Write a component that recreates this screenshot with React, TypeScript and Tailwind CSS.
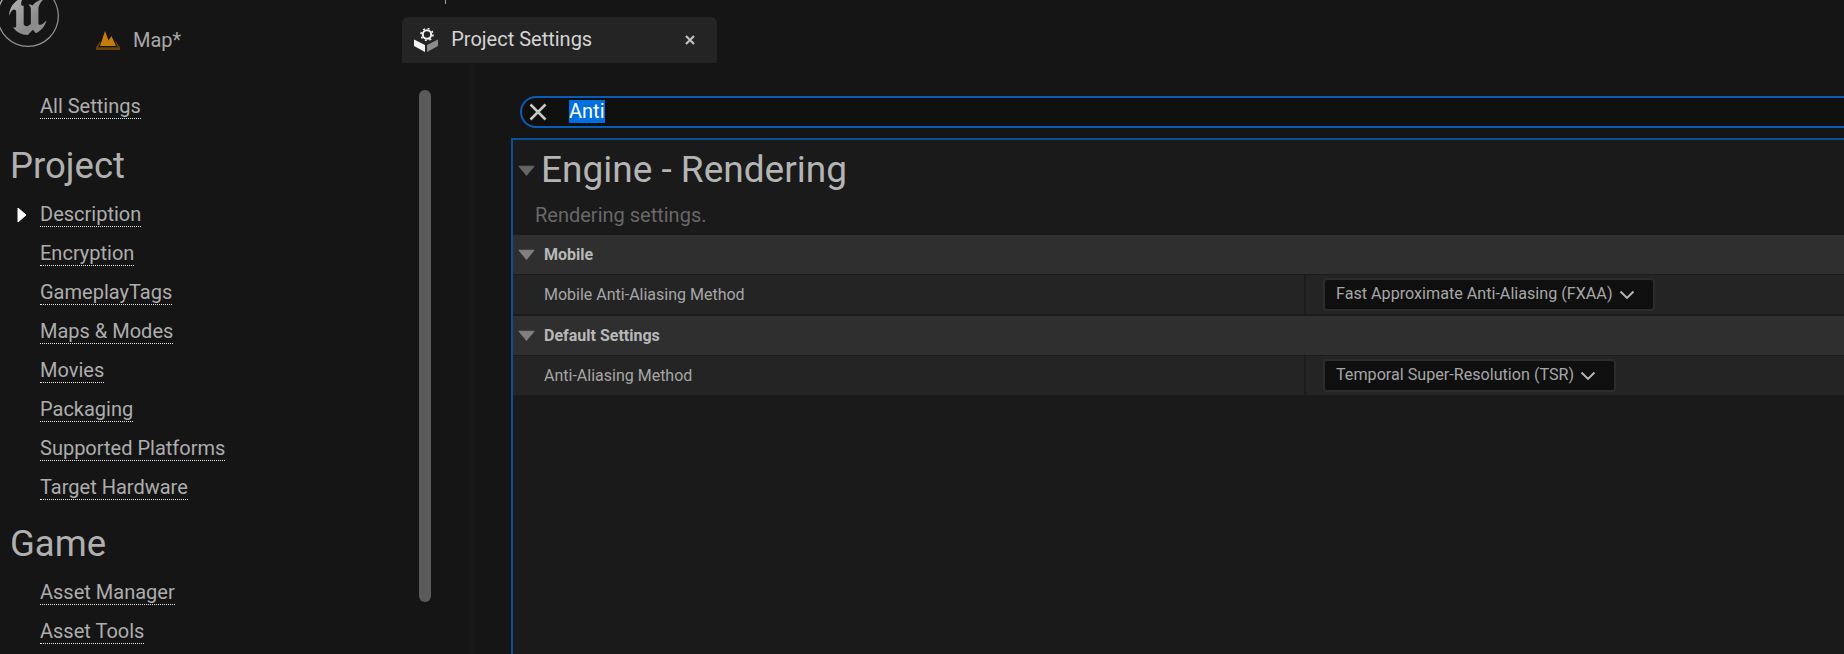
import { SiUnrealengine } from "react-icons/si";

const projectItems = ["Description", "Encryption", "GameplayTags", "Maps & Modes", "Movies", "Packaging", "Supported Platforms", "Target Hardware"];
const gameItems = ["Asset Manager", "Asset Tools"];

function Triangle({ className }: { className: string }) {
  return (
    <svg viewBox="0 0 16 10" className={className}>
      <path d="M1 1h14L8 9.500z" fill="currentColor" stroke="currentColor" strokeWidth="1" strokeLinejoin="round" />
    </svg>
  );
}

function NavItem({ label, active }: { label: string; active?: boolean }) {
  return (
    <div className="flex h-[39px] items-center">
      <div className="flex w-10 shrink-0 justify-start pl-[17px]">
        {active && (
          <svg viewBox="0 0 10 16" className="h-4 w-2.5 text-white">
            <path d="M1 1l8 7-8 7z" fill="currentColor" stroke="currentColor" strokeLinejoin="round" />
          </svg>
        )}
      </div>
      <span className="border-b border-dotted border-[#e8e8e8] text-[20px] leading-[23px] text-[#adadad]">{label}</span>
    </div>
  );
}

function CategoryHeader({ label }: { label: string }) {
  return (
    <div className="flex h-10 items-center border-b border-[#1c1c1c] bg-[#2f2f2f]">
      <Triangle className="ml-[5px] h-[11px] w-[17px] text-[#808080]" />
      <span className="ml-[9px] text-[16px] font-bold text-[#b8b8b8]">{label}</span>
    </div>
  );
}

function SettingRow({ label, value }: { label: string; value: string }) {
  return (
    <div className="flex h-[39px] items-stretch bg-[#242424]">
      <div className="flex w-[793px] shrink-0 items-center border-r-2 border-[#1c1c1c] pl-[31px] text-[16px] text-[#a6a6a6]">{label}</div>
      <div className="flex items-center pl-[17px]">
        <div className="flex h-[33px] items-center gap-[6px] rounded-[4px] border-2 border-[#2c2c2c] bg-[#0f0f0f] pl-[11px] pr-[18px] text-[16.150px] text-[#a6a6a6]">
          <span>{value}</span>
          <svg viewBox="0 0 16 10" className="h-2.5 w-4 text-[#b8b8b8]">
            <path d="M1.500 1.500L8 8l6.500-6.500" fill="none" stroke="currentColor" strokeWidth="1.900" />
          </svg>
        </div>
      </div>
    </div>
  );
}

export default function App() {
  return (
    <div className="flex h-[654px] w-[1844px] flex-col overflow-hidden bg-[#151515] font-['Roboto',sans-serif]">
      {/* title bar */}
      <div className="flex h-[63px] shrink-0">
        <svg width="0" height="0" className="absolute">
          <defs>
            <linearGradient id="ue-logo" x1="0" y1="0" x2="1" y2="1">
              <stop offset="0" stopColor="#c8c8c8" />
              <stop offset="0.6" stopColor="#8a8a8a" />
              <stop offset="1" stopColor="#a0a0a0" />
            </linearGradient>
          </defs>
        </svg>
        <div className="-mt-[15px] ml-[-3px] h-[62px] w-[62px] shrink-0 text-[#a4a4a4] [&_path]:fill-[url(#ue-logo)]">
          <SiUnrealengine size={62} />
        </div>
        <div className="ml-[37px] flex h-[63px] items-center pt-[16px]">
          <svg viewBox="0 0 24 20" className="h-5 w-6">
            <path d="M0 20v-2.500l4-6 .8.800-2.800 5h20l-2.800-5 .8-.800 4 6V20z" fill="#6b4308" />
            <path d="M4 16L9 1l3.500 9.500L15.500 6 20 16z" fill="#c47c0c" />
          </svg>
          <span className="ml-[13px] text-[20px] text-[#a8a8a8]">Map*</span>
        </div>
        <div className="ml-[221px] flex flex-col">
          <div className="ml-[43px] h-[4px] w-px bg-[#a0a0a0]" />
          <div className="mt-[13px] flex h-[46px] w-[315px] items-center rounded-t-[6px] bg-[#242424] pl-3">
            <svg viewBox="0 0 24 24" className="h-6 w-6">
              <path d="M0 11.500l11 5.500v7L0 18z" fill="#f4f4f4" />
              <path d="M13 17l11-5.500V18l-11 6z" fill="#8c8c8c" />
              <circle cx="13" cy="6.500" r="4.200" fill="none" stroke="#f4f4f4" strokeWidth="2" />
              <circle cx="13" cy="6.500" r="6" fill="none" stroke="#f4f4f4" strokeWidth="1.500" strokeDasharray="2 2.700" />
            </svg>
            <span className="ml-[13px] w-[234px] pb-[2px] text-[20px] text-[#d4d4d4]">Project Settings</span>
            <svg viewBox="0 0 10 10" className="h-2.5 w-2.5 text-[#c0c0c0]">
              <path d="M1 1l8 8M9 1l-8 8" stroke="currentColor" strokeWidth="2.200" />
            </svg>
          </div>
        </div>
      </div>

      <div className="flex min-h-0 flex-1">
        {/* sidebar */}
        <div className="flex w-[470px] shrink-0 overflow-hidden">
          <div className="w-[419px] shrink-0 pt-[24px]">
            <NavItem label="All Settings" />
            <div className="mt-[18px] h-[44px] pl-[10px] text-[36.500px] leading-[44px] text-[#b0b0b0]">Project</div>
            <div className="mt-[7px]">
              <NavItem label={projectItems[0]} active />
              {projectItems.slice(1).map((item) => (
                <NavItem key={item} label={item} />
              ))}
            </div>
            <div className="mt-[15px] h-[44px] pl-[10px] text-[36.500px] leading-[44px] text-[#b0b0b0]">Game</div>
            <div className="mt-[7px]">
              {gameItems.map((item) => (
                <NavItem key={item} label={item} />
              ))}
            </div>
          </div>
          <div className="mt-[27px] h-[512px] w-3 rounded-full bg-[#5a5a5a]" />
        </div>
        <div className="w-[5px] shrink-0 bg-[#181818]" />

        {/* details panel */}
        <div className="min-w-0 flex-1 pl-[36px] pt-[33px]">
          <div className="ml-[9px] flex h-8 w-[1400px] items-center rounded-l-full border-2 border-[#0a5cb4] bg-[#0f0f0f]">
            <svg viewBox="0 0 18 18" className="ml-[7px] h-[18px] w-[18px] text-[#c8c8c8]">
              <path d="M1.500 1.500l15 15M16.500 1.500l-15 15" stroke="currentColor" strokeWidth="2.500" />
            </svg>
            <span className="-mt-[2px] ml-[22px] h-[23px] bg-[#0070e0] text-[20px] leading-[23px] text-white">Anti</span>
          </div>
          <div className="mt-[10px] h-[600px] w-[1400px] border-l-2 border-t-2 border-[#0a4f9c] bg-[#1a1a1a]">
            <div className="flex h-[52px] items-center pt-[8px]">
              <Triangle className="ml-[5px] h-[11px] w-[17px] text-[#666666]" />
              <span className="ml-[6px] text-[37px] leading-[44px] text-[#b4b4b4]">Engine - Rendering</span>
            </div>
            <div className="flex h-[43px] items-center pl-[22px] pt-[3px] text-[20px] text-[#686868]">Rendering settings.</div>
            <CategoryHeader label="Mobile" />
            <SettingRow label="Mobile Anti-Aliasing Method" value="Fast Approximate Anti-Aliasing (FXAA)" />
            <div className="h-[2px] bg-[#1c1c1c]" />
            <CategoryHeader label="Default Settings" />
            <SettingRow label="Anti-Aliasing Method" value="Temporal Super-Resolution (TSR)" />
          </div>
        </div>
      </div>
    </div>
  );
}
